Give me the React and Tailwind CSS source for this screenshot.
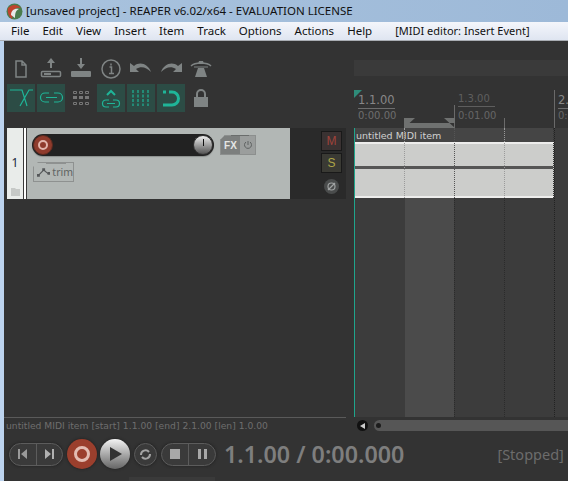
import React from "react";

const menus = ["File", "Edit", "View", "Insert", "Item", "Track", "Options", "Actions", "Help"];

const ToolIcon = ({ children }) => (
  <svg width="28" height="28" viewBox="0 0 28 28" fill="none" stroke="#7f8484" strokeWidth="1.5">{children}</svg>
);

const topIcons = [
  <path key="n" d="M9 6h6l4 4v12H9zM15 6v4h4" />,
  <g key="s"><path d="M14 13V6" strokeWidth="2" /><path d="M10 8l4-5 4 5z" fill="#7f8484" stroke="none" /><rect x="4.500" y="16.500" width="19" height="5" rx="1" /><path d="M7 19h7" strokeWidth="2" /></g>,
  <g key="l"><path d="M14 3v8" strokeWidth="2" /><path d="M10 9l4 5 4-5z" fill="#7f8484" stroke="none" /><rect x="4" y="16" width="20" height="6" rx="1" fill="#7f8484" stroke="none" /></g>,
  <g key="i"><circle cx="14" cy="14" r="9" /><path d="M12.500 12h2v6M12 18.500h5M14 8.500v2" /></g>,
  <path key="u" d="M3 8v9h9l-3-3c5-3 10-2 15 3-3-8-11-11-17-6z" fill="#7f8484" stroke="none" />,
  <path key="r" d="M25 8v9h-9l3-3c-5-3-10-2-15 3 3-8 11-11 17-6z" fill="#7f8484" stroke="none" />,
  <g key="m"><path d="M4 11c4-4 16-4 20 0" /><path d="M7 12h14" strokeWidth="1" /><path d="M11 13h6l3 9H8z" fill="#7f8484" stroke="none" /><path d="M12 6h4l1 3h-6z" fill="#7f8484" stroke="none" /></g>,
];

const ToggleIcon = ({ children }) => (
  <div className="w-[28px] h-[28px] flex items-center justify-center bg-[#2c4c45]">
    <svg width="28" height="28" viewBox="0 0 28 28" fill="none" stroke="#1fb598" strokeWidth="1.200">{children}</svg>
  </div>
);

const Track = () => (
  <div className="flex h-[71px] pl-[3px] w-[342px]">
    <div className="w-[16px] bg-[#e9ecea] flex flex-col items-center">
      <span className="mt-[27px] text-[12px] leading-[16px] text-[#1a2a40]">1</span>
      <svg className="mt-auto mb-[3px]" width="9" height="8" viewBox="0 0 9 8"><path d="M0 0h4l1 1h4v7H0z" fill="#c6c9c7" /></svg>
    </div>
    <div className="w-[1px] bg-[#3a3a3a]" />
    <div className="w-[2px] bg-white" />
    <div className="w-[1px] bg-[#3a3a3a]" />
    <div className="w-[263px] bg-[#b2b7b5] pt-[6px] pl-[5px] flex flex-col gap-[6px]">
      <div className="flex items-start gap-[6px]">
        <div className="w-[182px] h-[22px] rounded-full bg-[#222222] flex items-center justify-between shadow-[0_1px_1px_#8b8f8d]">
          <div className="w-[20px] h-[20px] rounded-full bg-[#8f3b2c] flex items-center justify-center ml-[1px] border border-[#5a2a20]">
            <div className="w-[10px] h-[10px] rounded-full border-[2px] border-[#e2b5ab]" />
          </div>
          <div className="w-[20px] h-[20px] rounded-full bg-gradient-to-b from-[#f0f0f0] to-[#555555] flex justify-center mr-[1px] border border-[#333333]">
            <div className="w-[1px] h-[7px] mt-[3px] bg-[#111111]" />
          </div>
        </div>
        <div className="relative flex w-[36px] h-[20px] mt-[1px] border border-[#8c8f8e] bg-[#7c7f7e] shadow-[0_1px_0_#999d9b] [clip-path:polygon(5px_0,100%_0,100%_100%,0_100%,0_5px)]">
          <div className="absolute left-[10px] top-[-1px] w-[18px] h-[1px] bg-[#6a6d6c]" />
          <span className="w-[19px] text-center text-[10px] leading-[19px] font-bold text-[#e4e6e5] font-['Liberation_Sans',sans-serif]">FX</span>
          <div className="flex-1 bg-[#9b9e9d] flex items-center justify-center">
            <svg width="10" height="10" viewBox="0 0 10 10" fill="none" stroke="#5f6362" strokeWidth="1"><path d="M3 2a3.500 3.500 0 1 0 4 0M5 1v4" /></svg>
          </div>
        </div>
      </div>
      <div className="relative flex items-center w-[41px] h-[20px] ml-[1px] border border-[#8e9190] shadow-[0_1px_0_#999d9b] pl-[3px] gap-[2px] [clip-path:polygon(5px_0,100%_0,100%_100%,0_100%,0_5px)]">
        <div className="absolute left-[12px] top-[0px] w-[20px] h-[1px] bg-[#8e9190]" />
        <svg width="14" height="10" viewBox="0 0 14 10"><path d="M2 8l5-5 5 4" fill="none" stroke="#55585a" strokeWidth="1.200" /><path d="M0 7h3v3H0zM5.500 1h3v3h-3zM11 5h3v3h-3z" fill="#55585a" /></svg>
        <span className="text-[10.5px] leading-[16px] text-[#5e6362]">trim</span>
      </div>
    </div>
    <div className="flex-1 bg-[#2a2a2a] flex flex-col items-end pt-[3px] pr-[4px] font-['Liberation_Sans',sans-serif]">
      <div className="w-[21px] h-[20px] bg-[#3a3232] border border-[#191919] text-center text-[12px] leading-[18px] text-[#a0423b]">M</div>
      <div className="w-[21px] h-[20px] mt-[2px] bg-[#3a3a34] border border-[#191919] text-center text-[12px] leading-[18px] text-[#aca447]">S</div>
      <div className="w-[15px] h-[15px] mt-[6px] mr-[3px] rounded-full bg-[#4a4c4c] flex items-center justify-center">
        <svg width="11" height="11" viewBox="0 0 11 11" fill="none" stroke="#a0a3a3" strokeWidth="1.200"><circle cx="5.500" cy="5.500" r="3.500" /><path d="M2 9l7-7" /></svg>
      </div>
    </div>
  </div>
);

const Bands = () => (
  <div className="absolute inset-0 flex">
    <div className="w-[51px] bg-[#3c3c3c] border-l border-[#1fa58c]" />
    <div className="w-[49px] bg-[#4b4b4b]" />
    <div className="w-[50px] bg-[#3c3c3c] border-l border-dotted border-[#2b2b2b]" />
    <div className="w-[50px] bg-[#3c3c3c] border-l border-dotted border-[#2b2b2b]" />
    <div className="flex-1 bg-[#3c3c3c] border-l border-dotted border-[#222222]" />
  </div>
);

const Ruler = () => (
  <div className="relative h-[38px] font-['DejaVu_Sans',sans-serif]">
    <svg className="absolute left-0 top-0" width="9" height="9" viewBox="0 0 9 9"><path d="M0 0h8L0 8z" fill="#2f8c7a" /></svg>
    <div className="absolute left-[4px] top-[2px] w-[37px] border-b border-[#6d6d6d] text-[11.5px] leading-[16px] text-[#888888]">1.1.00</div>
    <div className="absolute left-[4px] top-[19px] text-[10px] leading-[14px] text-[#6e6e6e]">0:00.00</div>
    <div className="absolute left-[104px] top-[1px] w-[37px] border-b border-[#5e5e5e] text-[10px] leading-[15px] text-[#5f5f5f]">1.3.00</div>
    <div className="absolute left-[104px] top-[19px] text-[10px] leading-[14px] text-[#666666]">0:01.00</div>
    <div className="absolute left-[100px] top-[15px] h-[23px] w-[1px] bg-[#6a6a6a]" />
    <div className="absolute left-[150px] top-[28px] h-[10px] w-[1px] bg-[#6a6a6a]" />
    <div className="absolute left-[200px] top-0 h-[38px] w-[1px] bg-[#6a6a6a]" />
    <div className="absolute left-[204px] top-[2px] w-[37px] border-b border-[#6d6d6d] text-[11.5px] leading-[16px] text-[#888888]">2.1.00</div>
    <div className="absolute left-[204px] top-[19px] text-[10px] leading-[14px] text-[#666666]">0:02.00</div>
    <svg className="absolute left-[50px] top-[28px]" width="51" height="10" viewBox="0 0 51 10"><path d="M0 5h51v5H0zM0 0h11L0 10zM51 0H40l11 10z" fill="#6f7170" /></svg>
  </div>
);

const MidiItem = () => (
  <div className="absolute left-[1px] top-0 w-[199px] h-[70px] flex flex-col">
    <div className="h-[14px] bg-[#454545] pl-[1px] text-[9.5px] leading-[15px] text-[#d0d0d0] font-['DejaVu_Sans',sans-serif]">untitled MIDI item</div>
    <div className="flex-1 bg-[#cccdcb] border-t-2 border-b-2 border-[#ededec] pt-[22px]">
      <div className="h-[3px] mr-[1px] bg-[#555555]" />
    </div>
    <div className="absolute inset-0 flex">
      <div className="w-[50px] border-r border-dotted border-[#9a9a9a]" />
      <div className="w-[50px] border-r border-dotted border-[#555555]" />
      <div className="w-[50px] border-r border-dotted border-[#9a9a9a]" />
      <div className="w-[49px] border-r border-dotted border-[#333333]" />
    </div>
  </div>
);

const Transport = () => (
  <div className="h-[45px] flex flex-col">
    <div className="flex items-center h-[36px] pl-[5px]">
      <div className="flex w-[54px] h-[23px] rounded-full border border-[#5c5c5c] bg-[#3a3a3a] shadow-[0_0_3px_#1f1f1f]">
        <div className="flex-1 flex items-center justify-center border-r border-[#5c5c5c]">
          <svg width="11" height="10" viewBox="0 0 11 10"><path d="M1 0h2v10H1zM10 0v10L4 5z" fill="#9a9a9a" /></svg>
        </div>
        <div className="flex-1 flex items-center justify-center">
          <svg width="11" height="10" viewBox="0 0 11 10"><path d="M10 0H8v10h2zM1 0v10l6-5z" fill="#b0b0b0" /></svg>
        </div>
      </div>
      <div className="w-[30px] h-[30px] ml-[4px] rounded-full bg-[#9b3f2d] flex items-center justify-center shadow-[0_0_3px_#1c1c1c]">
        <div className="w-[16px] h-[16px] rounded-full border-[3px] border-[#e3bcb2]" />
      </div>
      <div className="w-[30px] h-[30px] ml-[3px] rounded-full bg-gradient-to-b from-[#f4f4f4] to-[#666666] flex items-center justify-center pl-[2px] shadow-[0_0_3px_#1c1c1c]">
        <svg width="12" height="14" viewBox="0 0 12 14"><path d="M0 0l12 7-12 7z" fill="#333333" /></svg>
      </div>
      <div className="w-[23px] h-[23px] ml-[4px] rounded-full border border-[#5c5c5c] bg-[#3a3a3a] flex items-center justify-center shadow-[0_0_3px_#1f1f1f]">
        <svg width="13" height="13" viewBox="0 0 13 13" fill="none" stroke="#a5a5a5" strokeWidth="2"><path d="M2 7a4.500 4.500 0 0 1 8-3M11 6a4.500 4.500 0 0 1-8 3" /></svg>
      </div>
      <div className="flex w-[55px] h-[23px] ml-[4px] rounded-full border border-[#5c5c5c] bg-[#3a3a3a] shadow-[0_0_3px_#1f1f1f]">
        <div className="flex-1 flex items-center justify-center border-r border-[#5c5c5c]">
          <div className="w-[10px] h-[10px] bg-[#a8a8a8]" />
        </div>
        <div className="flex-1 flex items-center justify-center gap-[3px]">
          <div className="w-[3px] h-[10px] bg-[#a8a8a8]" />
          <div className="w-[3px] h-[10px] bg-[#a8a8a8]" />
        </div>
      </div>
      <span className="ml-[8px] text-[23.3px] leading-[28px] font-semibold text-[#7e7e7e] whitespace-nowrap">1.1.00 / 0:00.000</span>
      <span className="ml-[93px] text-[14.5px] leading-[20px] text-[#6c6c6c] whitespace-nowrap">[Stopped]</span>
    </div>
    <div className="mt-auto ml-[125px] w-[86px] h-[4px] bg-[#3a3a3a]" />
  </div>
);

export default function App() {
  return (
    <div className="w-[568px] h-[481px] overflow-hidden flex flex-col bg-[#333333] font-['Noto_Sans',sans-serif]">
      <div className="h-[22px] flex items-center pl-[6px] gap-[3px] bg-gradient-to-r from-[#a9c3de] to-[#9db9d8] text-[11.5px] text-[#111111]">
        <svg width="17" height="17" viewBox="0 0 17 17"><circle cx="8.500" cy="8.500" r="8" fill="#4a7c4e" /><path d="M2 5c4-4 9-4 13 0-4-1-7 0-8 5l-1 6C3 14 1 9 2 5z" fill="#c0432e" /><path d="M5 12c0-4 3-7 8-6-3 1-4 4-4 9z" fill="#e8e8e8" /></svg>
        <span className="whitespace-nowrap">[unsaved project] - REAPER v6.02/x64 - EVALUATION LICENSE</span>
      </div>
      <div className="h-[19px] flex items-center pl-[11px] gap-[13px] bg-gradient-to-b from-[#f4f6fb] to-[#dfe5f1] border-b border-[#a9adb3] text-[11.5px] text-[#111111]">
        {menus.map((m) => <span key={m}>{m}</span>)}
        <span className="ml-[10px] text-[11px] whitespace-nowrap">[MIDI editor: Insert Event]</span>
      </div>
      <div className="flex-1 flex flex-col border-l-4 border-[#bcd3ee]">
        <div className="flex flex-1 min-h-0">
          <div className="w-[350px] flex flex-col">
            <div className="pl-[3px] pt-[14px] h-[87px]">
              <div className="flex gap-[2px]">
                {topIcons.map((icon, i) => <ToolIcon key={i}>{icon}</ToolIcon>)}
              </div>
              <div className="flex gap-[2px] mt-[1px]">
                <ToggleIcon><path d="M3 6h12l5 16M26 6h-4l-9 16" /></ToggleIcon>
                <ToggleIcon><path d="M12 9H8a4.500 4.500 0 0 0 0 9h4M17 9h4a4.500 4.500 0 0 1 0 9h-4M9 13.500h11" /></ToggleIcon>
                <svg width="28" height="28" viewBox="0 0 28 28"><g fill="none" stroke="#777777" strokeWidth="1"><path d="M6.500 7.500h3v2h-3zM12.500 7.500h3v2h-3zM18.500 7.500h3v2h-3zM6.500 18.500h3v2h-3zM12.500 18.500h3v2h-3zM18.500 18.500h3v2h-3z" /></g><path d="M6 12h4v3H6zM12 12h4v3h-4zM18 12h4v3h-4z" fill="#777777" /></svg>
                <ToggleIcon><path d="M10 11l4-4 4 4" strokeWidth="2" /><path d="M12 16H9a3.500 3.500 0 0 0 0 7h3M16 16h3a3.500 3.500 0 0 1 0 7h-3M10 19.500h8" /></ToggleIcon>
                <ToggleIcon><path d="M6 6v16M11 6v16M16 6v16M21 6v16" strokeDasharray="3 1.500" /></ToggleIcon>
                <ToggleIcon><path d="M6 8h3M12 8h3a6.500 6.500 0 0 1 0 13H6" strokeWidth="3" /></ToggleIcon>
                <svg width="28" height="28" viewBox="0 0 28 28" fill="none"><rect x="7" y="13" width="14" height="10" fill="#7f8484" /><path d="M10 13V10a4 4 0 0 1 8 0v3" stroke="#7f8484" strokeWidth="2" /></svg>
              </div>
            </div>
            <Track />
            <div className="mt-auto mr-[8px] border-t border-[#5a5a5a] h-[19px] text-[9.2px] leading-[15px] text-[#6e6e6e] pl-[2px] font-['DejaVu_Sans',sans-serif] whitespace-nowrap">untitled MIDI item [start] 1.1.00 [end] 2.1.00 [len] 1.0.00</div>
          </div>
          <div className="flex-1 flex flex-col min-w-0">
            <div className="h-[16px] mt-[19px] mb-[14px] bg-[#3a3a3a]" />
            <Ruler />
            <div className="flex-1 relative">
              <Bands />
              <MidiItem />
            </div>
            <div className="h-[19px] flex items-center pb-[2px]">
              <div className="ml-[3px] w-[11px] h-[11px] rounded-full bg-[#111111] flex items-center justify-center">
                <svg width="5" height="6" viewBox="0 0 5 6"><path d="M5 0v6L0 3z" fill="#cccccc" /></svg>
              </div>
              <div className="ml-[6px] flex-1 h-[11px] rounded-l-full bg-[#565656] flex items-center pl-[2px]">
                <div className="w-[5px] h-[5px] rounded-full bg-[#1c1c1c]" />
              </div>
            </div>
          </div>
        </div>
        <Transport />
      </div>
    </div>
  );
}
